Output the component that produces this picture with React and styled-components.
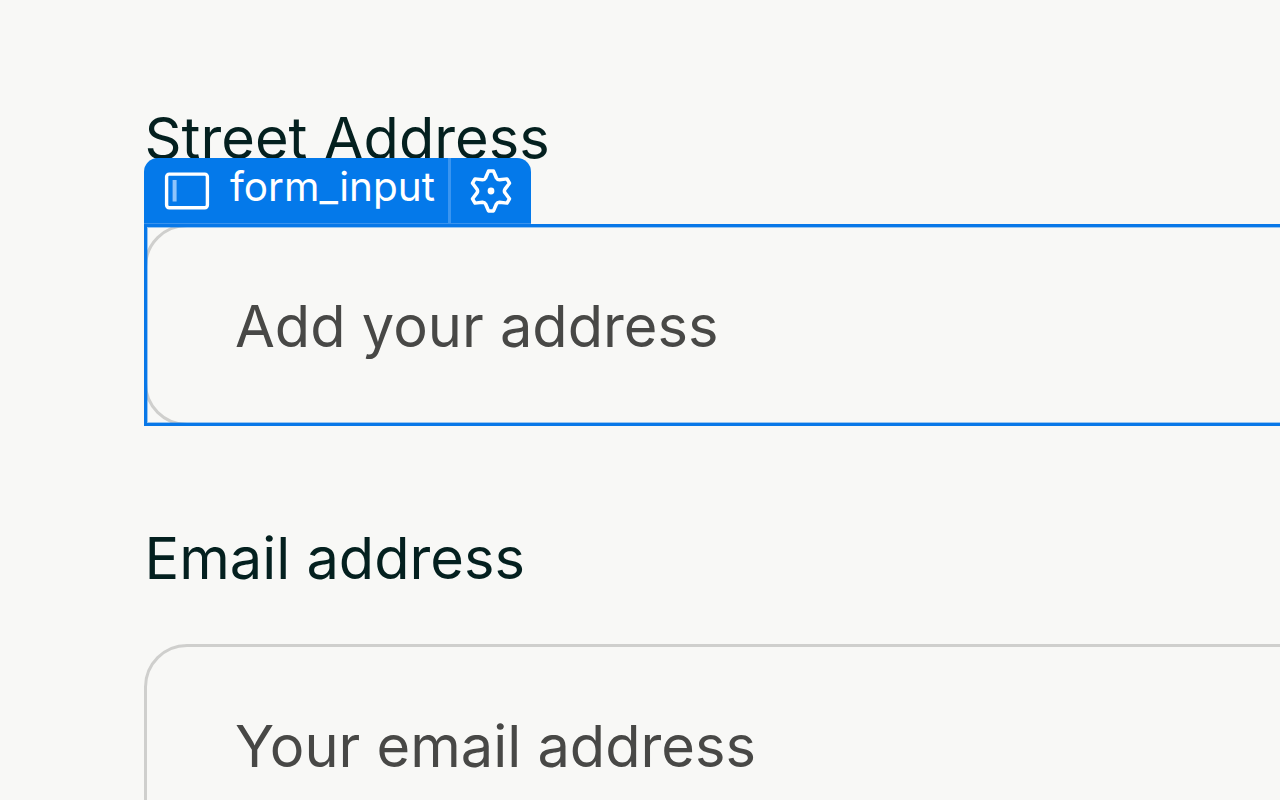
import styled, {createGlobalStyle} from 'styled-components';

const fields = [
    {id: 'street', label: 'Street Address', placeholder: 'Add your address', selected: true},
    {id: 'email', label: 'Email address', placeholder: 'Your email address'},
]

function InputIcon() {
    return (
        <svg width="46" height="38" viewBox="0 0 46 38" fill="none">
            <rect x="2.6" y="2.1" width="40.8" height="33.6" rx="2.6" stroke="white" strokeWidth="3.4" />
            <rect x="8.6" y="8" width="4" height="21.5" fill="#8fc4fb" />
        </svg>
    )
}

// one tooth of the gear, repeated every 60 degrees
const tooth = [[-2.5, -19.9], [2.5, -19.9], [5.4, -13], [6.4, -11.1], [8.55, -11.18]]

const gearPath = [0, 1, 2, 3, 4, 5].map((step)=>{
    const angle = step * Math.PI / 3
    const p = tooth.map(([x, y])=>(
        `${(x * Math.cos(angle) - y * Math.sin(angle)).toFixed(2)} ${(x * Math.sin(angle) + y * Math.cos(angle)).toFixed(2)}`
    ))
    return `${step ? 'L' : 'M'}${p[0]}L${p[1]}L${p[2]}Q${p[3]} ${p[4]}`
}).join('') + 'Z'

function GearIcon() {
    return (
        <svg width="44" height="46" viewBox="-22 -23 44 46" fill="none">
            <path d={gearPath} stroke="white" strokeWidth="3.5" strokeLinejoin="round" />
            <circle r="3.4" fill="white" />
        </svg>
    )
}

function Selection() {
    return (
        <Outline>
            <Tag>
                <TagName>
                    <InputIcon />
                    <TagText>form_input</TagText>
                </TagName>
                <TagSettings>
                    <GearIcon />
                </TagSettings>
            </Tag>
        </Outline>
    )
}

function App() {
    return (
        <>
            <GlobalStyle />
            <Form>
                {fields.map((field)=>(
                    <Field key={field.id}>
                        <Label>{field.label}</Label>
                        <InputBox>
                            <Placeholder>{field.placeholder}</Placeholder>
                            {field.selected && <Selection />}
                        </InputBox>
                    </Field>
                ))}
            </Form>
        </>
    )
}

export default App

const GlobalStyle = createGlobalStyle`

* {
    box-sizing:border-box;
}

body {
    margin:0;
    background-color:#f8f8f6;
    font-family:Inter, "Liberation Sans", sans-serif;
}

`

const Form = styled.div`
height:800px;
overflow:hidden;
padding:103px 0 0 144px;
display:flex;
flex-direction:column;
gap:97px;

`

const Field = styled.div`
flex-shrink:0;
display:flex;
flex-direction:column;
gap:51px;

`

const Label = styled.div`
padding-left:0.5px;
font-size:57.75px;
line-height:70px;
color:#04201f;
white-space:nowrap;

`

const InputBox = styled.div`
position:relative;
width:1400px;
height:202px;
display:flex;
align-items:center;
padding-left:88px;
border:3.5px solid #cfcfcd;
border-radius:43px;

`

const Placeholder = styled.span`
margin-top:2px;
font-size:57.75px;
line-height:70px;
color:#484846;
white-space:nowrap;

`

const Outline = styled.div`
position:absolute;
inset:-3px;
border:3px solid #0878e8;
box-shadow:inset 0 0 0 1px rgba(8, 120, 232, 0.4);

`

const Tag = styled.div`
position:absolute;
left:-3px;
bottom:calc(100% + 3px);
width:387px;
height:66px;
display:flex;
overflow:hidden;
border-radius:14px 14px 0 0;
border-bottom:1px solid #3a93ee;
background-color:#0479ea;
color:white;

`

const TagName = styled.div`
width:307px;
display:flex;
align-items:center;
padding-left:20px;
gap:20px;
border-right:3px solid #3a95f0;

`

const TagText = styled.span`
font-size:40.5px;
line-height:50px;
margin-top:-7px;

`

const TagSettings = styled.div`
flex:1;
display:flex;
align-items:center;
justify-content:center;

`
